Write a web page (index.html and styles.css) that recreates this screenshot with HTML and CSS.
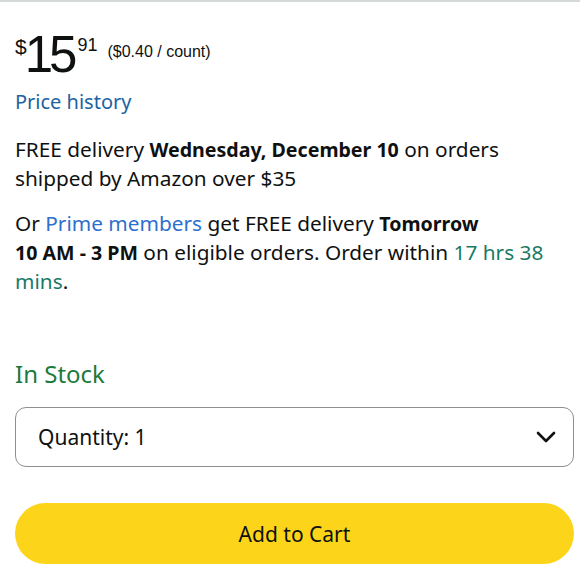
FILE: index.html
```html
<!DOCTYPE html>
<html lang="en">
<head>
<meta charset="utf-8">
<title>Buy box</title>
<link rel="stylesheet" href="styles.css">
</head>
<body>
<div class="topbar"></div>
<main class="buybox">
  <div class="price-row">
    <span class="price"><span class="cur">$</span><span class="whole">15</span><span class="frac">91</span></span>
    <span class="unit">($0.40 / count)</span>
  </div>
  <a class="history" href="#">Price history</a>
  <p class="delivery">FREE delivery <b>Wednesday, December 10</b> on orders shipped by Amazon over $35</p>
  <p class="delivery prime">Or <a class="prime-link" href="#">Prime members</a> get FREE delivery <b>Tomorrow</b> <b class="nowrap">10 AM - 3 PM</b> on eligible orders. Order within <span class="countdown">17 hrs 38 mins</span>.</p>
  <div class="stock">In Stock</div>
  <div class="qty">
    <span class="qty-label">Quantity: 1</span>
    <svg class="chev" width="20" height="12" viewBox="0 0 20 12"><path d="M2 2 L10 10 L18 2" fill="none" stroke="#111" stroke-width="2.6" stroke-linecap="round" stroke-linejoin="round"/></svg>
  </div>
  <button class="cart" type="button">Add to Cart</button>
</main>
</body>
</html>
```
FILE: styles.css
```css
html, body {
  margin: 0;
  padding: 0;
  background: #fff;
}
body {
  font-family: "Noto Sans", "DejaVu Sans", sans-serif;
  color: #0f1111;
}
.topbar {
  height: 2px;
  background: #d5d9d9;
}
.buybox {
  padding: 0 6px 0 15px;
  display: flex;
  flex-direction: column;
}
.price-row {
  display: flex;
  align-items: flex-start;
  margin-top: 27px;
  font-family: "Liberation Sans", Arial, sans-serif;
  color: #0f1111;
  height: 46px;
}
.price {
  display: flex;
  align-items: flex-start;
}
.cur {
  font-size: 21px;
  line-height: 22px;
  margin-top: 7px;
  margin-left: 0;
}
.whole {
  font-size: 51px;
  line-height: 51px;
  letter-spacing: -4px;
  margin-left: -2px;
}
.frac {
  font-size: 18px;
  line-height: 18px;
  margin-top: 7px;
  margin-left: 4px;
}
.unit {
  font-size: 16px;
  line-height: 18px;
  margin-top: 14px;
  margin-left: 10px;
}
.history {
  font-size: 20px;
  line-height: 28px;
  color: #2162a1;
  text-decoration: none;
  margin-top: 13px;
  align-self: flex-start;
}
.delivery {
  font-size: 20.8px;
  line-height: 28px;
  margin: 19px 0 0;
  max-width: 548px;
}
.delivery b {
  font-weight: 700;
  font-size: 19.6px;
  line-height: 28px;
}
.nowrap {
  white-space: nowrap;
}
.prime {
  margin-top: 17px;
}
.prime-link {
  color: #2d6fcd;
  text-decoration: none;
}
.countdown {
  color: #197a64;
}
.stock {
  color: #1c7a3c;
  font-size: 24px;
  line-height: 30px;
  margin-top: 64px;
}
.qty {
  margin-top: 18px;
  height: 58px;
  border: 1px solid #8d9090;
  border-radius: 11px;
  display: flex;
  align-items: center;
  justify-content: space-between;
  padding: 0 17px 0 22px;
}
.qty-label {
  font-size: 21px;
}
.chev {
  display: block;
}
.cart {
  margin-top: 36px;
  height: 61px;
  border: none;
  border-radius: 31px;
  background: #fcd51a;
  color: #0f1111;
  font-family: "Noto Sans", "DejaVu Sans", sans-serif;
  font-size: 21px;
  padding: 0;
}
```
